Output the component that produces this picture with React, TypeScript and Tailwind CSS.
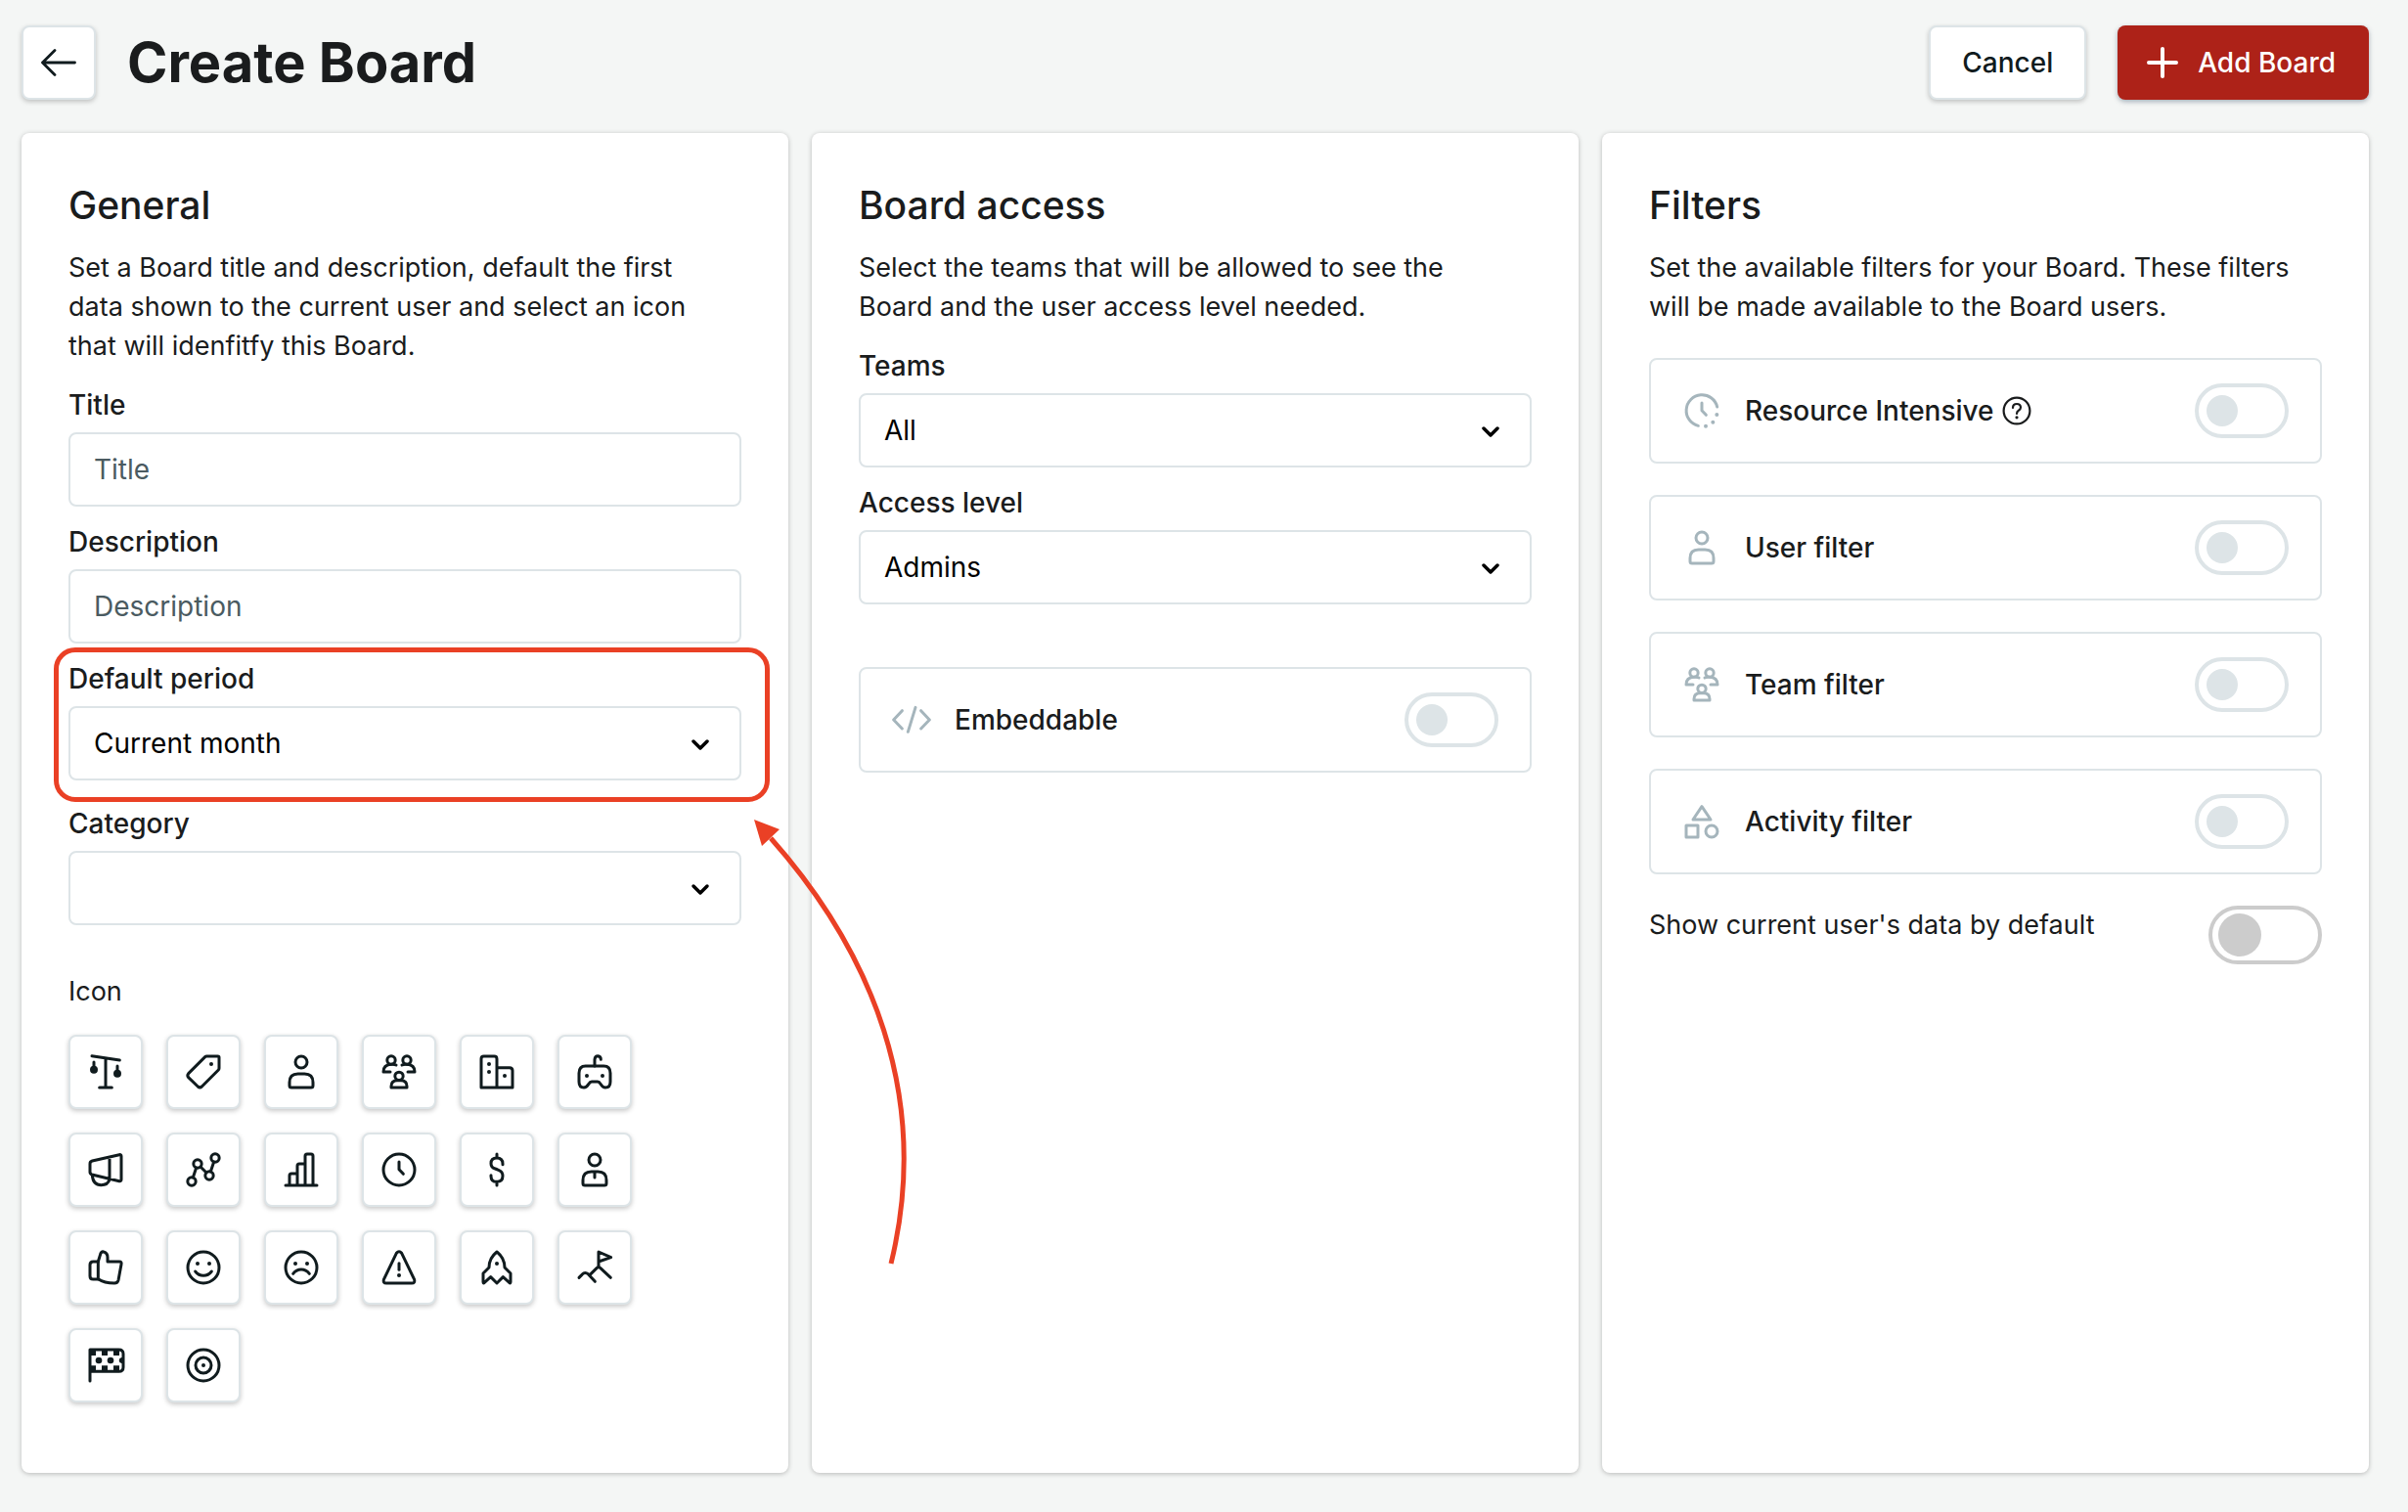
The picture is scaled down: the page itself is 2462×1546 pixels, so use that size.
import { ReactNode } from 'react';

// every icon is drawn on the same 120 grid, dots get the solid fill
function Icon({ children }: { children: ReactNode }) {
  return (
    <svg
      viewBox="-1 0 120 120"
      className="size-10"
      fill="none"
      stroke="currentColor"
      strokeWidth="9"
      strokeLinecap="round"
      strokeLinejoin="round"
      aria-hidden="true"
    >
      {children}
    </svg>
  );
}

function Dot({ x, y, r = 6 }: { x: number; y: number; r?: number }) {
  return <circle cx={x} cy={y} r={r} fill="currentColor" stroke="none" />;
}

const ScaleIcon = () => (
  <Icon>
    <path d="M17 11L102 24M59 18V108M40 108H78M23 30V50M95 42V62" />
    <Dot x={23} y={53} r={12} />
    <Dot x={95} y={65} r={12} />
  </Icon>
);

const TagIcon = () => (
  <Icon>
    <path d="M69 12H103Q107 12 107 16V49Q107 52 105 54L54 105Q48 110 42 105L13 77Q8 71 13 65L64 14Q66 12 69 12Z" />
    <Dot x={83} y={36} />
  </Icon>
);

const UserIcon = () => (
  <Icon>
    <circle cx="59" cy="30" r="18" />
    <path d="M23 102V92Q23 66 49 66H69Q95 66 95 92V102Q95 108 89 108H29Q23 108 23 102Z" />
  </Icon>
);

const TeamIcon = () => (
  <Icon>
    <circle cx="35" cy="24" r="12.5" />
    <circle cx="83" cy="24" r="12.5" />
    <path d="M50 39Q44 36 35 37Q11 38 11 60H32M68 39Q74 36 83 37Q107 38 107 60H86" />
    <circle cx="59" cy="73" r="12.5" />
    <path d="M35 108V104Q35 86 53 86H65Q83 86 83 104V108Z" />
  </Icon>
);

const BuildingIcon = () => (
  <Icon>
    <path d="M11 108V20Q11 12 19 12H51Q59 12 59 20V108ZM59 47H98Q107 47 107 56V108H59" />
    <Dot x={35} y={36} />
    <Dot x={35} y={60} />
    <Dot x={83} y={72} />
  </Icon>
);

const GamepadIcon = () => (
  <Icon>
    <path d="M59 42V22Q60 11 69 11Q78 12 78 22" />
    <path d="M31 42H87Q107 42 107 64V90Q107 108 92 108Q84 108 78 98Q73 90 68 90H50Q45 90 40 98Q34 108 26 108Q11 108 11 90V64Q11 42 31 42Z" />
    <Dot x={35} y={72} />
    <Dot x={83} y={72} />
  </Icon>
);

const MegaphoneIcon = () => (
  <Icon>
    <path d="M18 33L101 14Q107 13 107 19V90Q107 96 101 95L17 75Q11 73 11 67V42Q11 35 18 33ZM71 22V88" />
    <path d="M18 77Q20 107 45 107Q66 107 71 90" />
  </Icon>
);

const GraphIcon = () => (
  <Icon>
    <circle cx="23" cy="96" r="12.5" />
    <circle cx="41" cy="42" r="12.5" />
    <circle cx="77" cy="78" r="12.5" />
    <circle cx="95" cy="24" r="12.5" />
    <path d="M27 84L37 54M50 51L68 69M81 66L91 36" />
  </Icon>
);

const BarsIcon = () => (
  <Icon>
    <path d="M11 108H107M23 108V78Q23 72 29 72H47M47 108V48Q47 42 53 42H71M71 108V18Q71 12 77 12H89Q95 12 95 18V108" />
  </Icon>
);

const ClockIcon = () => (
  <Icon>
    <circle cx="59" cy="60" r="48" />
    <path d="M59 36V59L72 73" />
  </Icon>
);

const DollarIcon = () => (
  <Icon>
    <path d="M77 44V42Q77 24 59 24Q41 24 41 41Q41 53 54 57L64 61Q77 66 77 79Q77 97 59 97Q41 97 41 80V77M59 12V23M59 98V108" />
  </Icon>
);

const ManagerIcon = () => (
  <Icon>
    <circle cx="59" cy="30" r="18" />
    <path d="M23 102V92Q23 66 49 66H69Q95 66 95 92V102Q95 108 89 108H29Q23 108 23 102ZM59 68V84" />
  </Icon>
);

const ThumbIcon = () => (
  <Icon>
    <path d="M36 42H21Q11 42 11 52V86Q11 96 21 96H36" />
    <path d="M36 42L43 19Q46 10 53 12Q65 15 65 29V42H101Q109 42 107 50L98 99Q96 108 86 108Q55 108 36 95Z" />
  </Icon>
);

const SmileIcon = () => (
  <Icon>
    <circle cx="59" cy="60" r="48" />
    <Dot x={41} y={48} />
    <Dot x={77} y={48} />
    <path d="M34 72Q44 85 59 85Q74 85 84 72" />
  </Icon>
);

const FrownIcon = () => (
  <Icon>
    <circle cx="59" cy="60" r="48" />
    <Dot x={41} y={48} />
    <Dot x={77} y={48} />
    <path d="M34 79Q44 66 59 66Q74 66 84 79" />
  </Icon>
);

const WarningIcon = () => (
  <Icon>
    <path d="M51 16Q59 7 67 16L106 97Q109 108 98 108H20Q9 108 12 97Z" />
    <path d="M59 47V67" />
    <Dot x={59} y={84} />
  </Icon>
);

const RocketIcon = () => (
  <Icon>
    <path d="M59 12Q83 31 83 60L101 78V104Q101 110 97 106L78 89L59 108L40 89L21 106Q17 110 17 104V78L35 60Q35 31 59 12Z" />
    <Dot x={59} y={48} />
  </Icon>
);

const SummitIcon = () => (
  <Icon>
    <path d="M71 58V12L109 29L71 42M44 83L66 61Q71 57 76 61L108 91M11 91L20 82Q29 72 39 80L60 103" />
  </Icon>
);

const RaceFlagIcon = () => (
  <Icon>
    <path d="M11 108V12H99Q113 12 113 25V66Q113 79 100 79H11" />
    <g fill="currentColor" stroke="none">
      <path d="M11 12H29V30H11ZM47 12H65V30H47ZM83 12H101V30H83ZM11 61H29V79H11ZM47 61H65V79H47ZM83 61H101V79H83Z" />
      <circle cx="38" cy="45" r="10" />
      <circle cx="74" cy="45" r="10" />
      <path d="M113 36H108Q100 38 100 45T108 54H113Z" />
    </g>
  </Icon>
);

const TargetIcon = () => (
  <Icon>
    <circle cx="59" cy="60" r="48" />
    <circle cx="59" cy="60" r="24" />
    <Dot x={59} y={60} />
  </Icon>
);

const ResourceIcon = () => (
  <Icon>
    <path d="M106 48A48 48 0 1 0 48 106M59 36V59L72 73" />
    <Dot x={105} y={72} />
    <Dot x={93} y={95} />
    <Dot x={71} y={107} />
  </Icon>
);

const ShapesIcon = () => (
  <Icon>
    <path d="M59 14L86 54H32ZM11 72H47V108H11Z" />
    <circle cx="89" cy="90" r="18" />
  </Icon>
);

const CodeIcon = () => (
  <Icon>
    <path d="M30 32L4 60L30 87M88 32L114 60L88 87M71 22L48 97" />
  </Icon>
);

const boardIcons = [
  { name: 'Scale', icon: <ScaleIcon /> },
  { name: 'Tag', icon: <TagIcon /> },
  { name: 'User', icon: <UserIcon /> },
  { name: 'Team', icon: <TeamIcon /> },
  { name: 'Building', icon: <BuildingIcon /> },
  { name: 'Gamepad', icon: <GamepadIcon /> },
  { name: 'Megaphone', icon: <MegaphoneIcon /> },
  { name: 'Graph', icon: <GraphIcon /> },
  { name: 'Bars', icon: <BarsIcon /> },
  { name: 'Clock', icon: <ClockIcon /> },
  { name: 'Dollar', icon: <DollarIcon /> },
  { name: 'Manager', icon: <ManagerIcon /> },
  { name: 'Thumb up', icon: <ThumbIcon /> },
  { name: 'Smile', icon: <SmileIcon /> },
  { name: 'Frown', icon: <FrownIcon /> },
  { name: 'Warning', icon: <WarningIcon /> },
  { name: 'Rocket', icon: <RocketIcon /> },
  { name: 'Summit', icon: <SummitIcon /> },
  { name: 'Race flag', icon: <RaceFlagIcon /> },
  { name: 'Target', icon: <TargetIcon /> },
];

function Panel({ title, text, children }: { title: string; text: string; children: ReactNode }) {
  return (
    <section className="min-w-0 rounded-lg bg-white px-12 pt-[50px] pb-12 shadow-[0_1px_5px_rgba(0,0,0,0.25)]">
      <h2 className="mb-5 text-[39px] leading-12 font-medium">{title}</h2>
      <p className="mb-1 pr-6 text-[27px] leading-10">{text}</p>
      {children}
    </section>
  );
}

function TextField({ id, label }: { id: string; label: string }) {
  return (
    <div className="pt-4">
      <label htmlFor={id} className="mb-2 block text-[28px] leading-10 font-medium">
        {label}
      </label>
      <input
        id={id}
        type="text"
        placeholder={label}
        className="h-19 w-full rounded-lg border-2 border-[#dde4e7] bg-white px-6 text-[28px] placeholder:text-[#4b5b61]"
      />
    </div>
  );
}

function SelectField({ id, label, value }: { id: string; label: string; value: string }) {
  return (
    <div className="pt-4">
      <label htmlFor={id} className="mb-2 block text-[28px] leading-10 font-medium">
        {label}
      </label>
      <div className="relative">
        <select
          id={id}
          className="h-19 w-full appearance-none rounded-lg border-2 border-[#dde4e7] bg-white px-6 text-[28px] text-black"
        >
          <option>{value}</option>
        </select>
        <svg
          viewBox="0 0 24 24"
          className="pointer-events-none absolute top-7 right-[30px] size-6 fill-none stroke-black stroke-[3.5]"
          strokeLinecap="round"
          strokeLinejoin="round"
          aria-hidden="true"
        >
          <path d="M5 8L12 15L19 8" />
        </svg>
      </div>
    </div>
  );
}

function ToggleCard({ id, label, icon, help }: { id: string; label: string; icon: ReactNode; help?: boolean }) {
  return (
    <div className="flex h-27 items-center rounded-lg border-2 border-[#dde4e7] px-8">
      <span className="mr-6 text-[#a5b5bc]">{icon}</span>
      <label htmlFor={id} className="text-[28px] leading-10 font-medium">
        {label}
      </label>
      {help && (
        <button type="button" aria-label="Help" className="ml-2">
          <svg viewBox="0 0 30 30" className="size-[30px] fill-none stroke-current stroke-[2.2]" strokeLinecap="round">
            <circle cx="15" cy="15" r="13.4" />
            <path d="M11 12Q11 8 15 8Q19 8 19 11.6Q19 13.6 16.8 14.8Q15 15.8 15 18" />
            <circle cx="15" cy="21.8" r="1.6" fill="currentColor" stroke="none" />
          </svg>
        </button>
      )}
      <input
        id={id}
        type="checkbox"
        role="switch"
        className="ml-auto flex h-14 w-24 shrink-0 appearance-none items-center rounded-full border-4 border-[#dde4e7] px-2 before:size-8 before:rounded-full before:bg-[#dde4e7] before:content-[''] checked:justify-end"
      />
    </div>
  );
}

const cardButton =
  'flex h-19 items-center justify-center rounded-lg border-2 border-[#dde4e7] bg-white text-[#101b1e] shadow-[0_2px_5px_rgba(0,0,0,0.22)]';

export default function App() {
  return (
    <div className="flex min-h-screen flex-col bg-[#f4f6f5] pt-[26px] pr-10 pb-10 pl-[22px] font-['Inter',sans-serif] text-[#1a1c1d]">
      {/* header */}
      <header className="mb-[34px] flex items-center">
        <button type="button" aria-label="Back" className={`${cardButton} w-19`}>
          <svg
            viewBox="0 0 36 28"
            className="h-7 w-9 fill-none stroke-current stroke-[2.8]"
            strokeLinecap="round"
            strokeLinejoin="round"
            aria-hidden="true"
          >
            <path d="M34.5 14H1.5M14 1.5L1.5 14L14 26.5" />
          </svg>
        </button>
        <h1 className="ml-8 text-[56px] leading-19 font-bold">Create Board</h1>
        <button type="button" className={`${cardButton} ml-auto px-8 text-[28px] font-medium`}>
          Cancel
        </button>
        <button
          type="button"
          className="ml-8 flex h-19 items-center gap-5 rounded-lg bg-[#ad2218] pr-[34px] pl-[30px] text-[28px] font-medium text-white shadow-[0_2px_5px_rgba(16,40,70,0.35)]"
        >
          <svg viewBox="0 0 32 32" className="size-8 stroke-current stroke-4" strokeLinecap="round" aria-hidden="true">
            <path d="M16 2V30M2 16H30" />
          </svg>
          Add Board
        </button>
      </header>

      {/* panels */}
      <main className="grid flex-1 grid-cols-3 gap-6">
        <Panel
          title="General"
          text="Set a Board title and description, default the first data shown to the current user and select an icon that will idenfitfy this Board."
        >
          <TextField id="title" label="Title" />
          <TextField id="description" label="Description" />
          <div className="relative mb-2">
            <SelectField id="period" label="Default period" value="Current month" />
            {/* highlight frame and its arrow */}
            <div className="pointer-events-none absolute top-1 -right-[29px] -bottom-[22px] -left-[15px] rounded-[22px] border-[5px] border-[#ea4025]" />
            <svg
              viewBox="0 0 180 480"
              className="pointer-events-none absolute top-[166px] left-full z-10 ml-0.5 h-[480px] w-[180px]"
              aria-hidden="true"
            >
              <path d="M28 33C130 148 193 296 151 468" className="fill-none stroke-[#ea4025] stroke-5" />
              <path d="M11 14L37 24L19 41Z" className="fill-[#ea4025]" />
            </svg>
          </div>
          <SelectField id="category" label="Category" value="" />
          <p id="icon-label" className="mt-12 mb-6 text-[27px] leading-10">
            Icon
          </p>
          <div role="group" aria-labelledby="icon-label" className="grid w-fit grid-cols-6 gap-6">
            {boardIcons.map(({ name, icon }) => (
              <button key={name} type="button" aria-label={name} className={`${cardButton} w-19`}>
                {icon}
              </button>
            ))}
          </div>
        </Panel>

        <Panel
          title="Board access"
          text="Select the teams that will be allowed to see the Board and the user access level needed."
        >
          <SelectField id="teams" label="Teams" value="All" />
          <SelectField id="access" label="Access level" value="Admins" />
          <div className="mt-16">
            <ToggleCard id="embeddable" label="Embeddable" icon={<CodeIcon />} />
          </div>
        </Panel>

        <Panel
          title="Filters"
          text="Set the available filters for your Board. These filters will be made available to the Board users."
        >
          <div className="flex flex-col gap-8 pt-7">
            <ToggleCard id="resource" label="Resource Intensive" icon={<ResourceIcon />} help />
            <ToggleCard id="user-filter" label="User filter" icon={<UserIcon />} />
            <ToggleCard id="team-filter" label="Team filter" icon={<TeamIcon />} />
            <ToggleCard id="activity-filter" label="Activity filter" icon={<ShapesIcon />} />
            <div className="flex items-start justify-between">
              <label htmlFor="own-data" className="text-[27px] leading-10">
                Show current user's data by default
              </label>
              <input
                id="own-data"
                type="checkbox"
                role="switch"
                className="flex h-15 w-29 shrink-0 appearance-none items-center rounded-full border-4 border-[#ccc] px-1.5 before:size-11 before:rounded-full before:bg-[#ccc] before:content-[''] checked:justify-end"
              />
            </div>
          </div>
        </Panel>
      </main>
    </div>
  );
}
